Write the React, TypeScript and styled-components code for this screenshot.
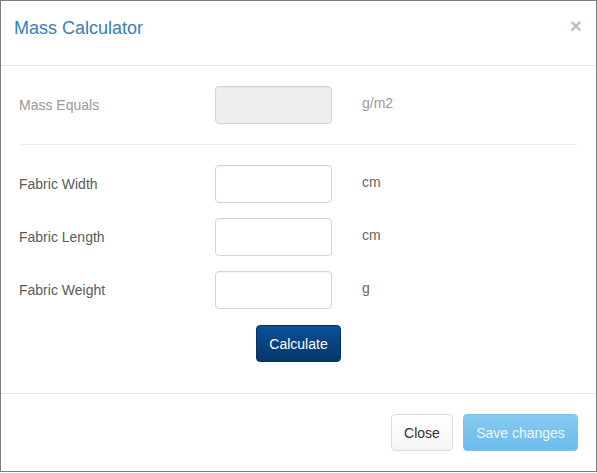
import styled, { createGlobalStyle } from "styled-components";

// Global reset: no body margin, Arial-width font everywhere
const GlobalStyle = createGlobalStyle`
  html, body {
    margin: 0;
    padding: 0;
    background: #fff;
  }
  body {
    font-family: "Liberation Sans", Arial, sans-serif;
    font-size: 14px;
    color: #333;
  }
  * { box-sizing: border-box; }
`;

interface Field {
    label: string;
    unit: string;
}

const fields: Field[] = [
    { label: "Fabric Width", unit: "cm" },
    { label: "Fabric Length", unit: "cm" },
    { label: "Fabric Weight", unit: "g" },
];

// App renders the mass calculator dialog
function App() {
    return (
        <>
            <GlobalStyle />
            <Modal>
                <Header>
                    <Title>Mass Calculator</Title>
                    <CloseX aria-label="Close">×</CloseX>
                </Header>
                <Body>
                    <FormRow>
                        <Label muted>Mass Equals</Label>
                        <Input disabled />
                        <Unit muted>g/m2</Unit>
                    </FormRow>
                    <Divider />
                    <Fields>
                        {fields.map((f) => (
                            <FormRow key={f.label}>
                                <Label>{f.label}</Label>
                                <Input />
                                <Unit>{f.unit}</Unit>
                            </FormRow>
                        ))}
                    </Fields>
                    <CalcWrap>
                        <CalcButton>Calculate</CalcButton>
                    </CalcWrap>
                </Body>
                <Footer>
                    <DefaultButton>Close</DefaultButton>
                    <PrimaryButton>Save changes</PrimaryButton>
                </Footer>
            </Modal>
        </>
    );
}

// Dialog frame
const Modal = styled.div`
  width: 597px;
  height: 472px;
  border: 1px solid #7c7c7c;
  background: #fff;
  display: flex;
  flex-direction: column;
`;

// Header with title and close glyph
const Header = styled.div`
  height: 65px;
  flex: 0 0 auto;
  padding: 17px 14px 0 13px;
  border-bottom: 1px solid #e5e5e5;
  display: flex;
  justify-content: space-between;
  align-items: flex-start;
`;

const Title = styled.h4`
  margin: 0;
  font-size: 18px;
  line-height: 20px;
  font-weight: normal;
  color: #3680bc;
`;

const CloseX = styled.button`
  border: 0;
  background: none;
  padding: 0;
  margin-top: -3px;
  font-family: "Liberation Sans", Arial, sans-serif;
  font-size: 21px;
  font-weight: bold;
  line-height: 1;
  color: #000;
  opacity: 0.25;
  cursor: pointer;
`;

// Body holding the form
const Body = styled.div`
  flex: 1;
  padding: 20px 19px 0 18px;
`;

const Fields = styled.div`
  display: flex;
  flex-direction: column;
  gap: 15px;
`;

const FormRow = styled.div`
  display: grid;
  grid-template-columns: 196px 117px auto;
  align-items: center;
  height: 38px;
`;

const Label = styled.label<{ muted?: boolean }>`
  color: ${(p) => (p.muted ? "#9a9a9a" : "#5a5a5a")};
`;

const Unit = styled.span<{ muted?: boolean }>`
  color: ${(p) => (p.muted ? "#9a9a9a" : "#666")};
  padding: 0 0 4px 30px;
`;

const Input = styled.input`
  width: 117px;
  height: 38px;
  border: 1px solid #d4d4d4;
  border-radius: 4px;
  background: #fff;
  font: inherit;
  padding: 6px 12px;
  box-shadow: inset 0 1px 1px rgba(0, 0, 0, 0.04);

  &:disabled {
    background: #eee;
    border-color: #d4d4d4;
  }
`;

const Divider = styled.hr`
  margin: 20px 0 20px 1px;
  border: 0;
  border-top: 1px solid #eee;
`;

const CalcWrap = styled.div`
  display: flex;
  justify-content: center;
  padding: 16px 0 0 1px;
`;

// Shared button base
const BaseButton = styled.button`
  height: 37px;
  padding: 0 12px;
  border-radius: 4px;
  font-family: "Liberation Sans", Arial, sans-serif;
  font-size: 14px;
  cursor: pointer;
`;

const CalcButton = styled(BaseButton)`
  width: 85px;
  color: #fff;
  background: linear-gradient(#0a5199, #05366a);
  border: 1px solid #043262;
`;

// Footer with action buttons
const Footer = styled.div`
  height: 78px;
  flex: 0 0 auto;
  border-top: 1px solid #e5e5e5;
  padding: 20px 18px 0 0;
  display: flex;
  justify-content: flex-end;
  align-items: flex-start;
  gap: 10px;
`;

const DefaultButton = styled(BaseButton)`
  width: 62px;
  color: #333;
  background: linear-gradient(#fff, #f4f4f4);
  border: 1px solid #dcdcdc;
`;

const PrimaryButton = styled(BaseButton)`
  width: 115px;
  color: #eef8ff;
  background: linear-gradient(#86caf1, #6bbced);
  border: 1px solid #79c3ee;
`;

export default App;
